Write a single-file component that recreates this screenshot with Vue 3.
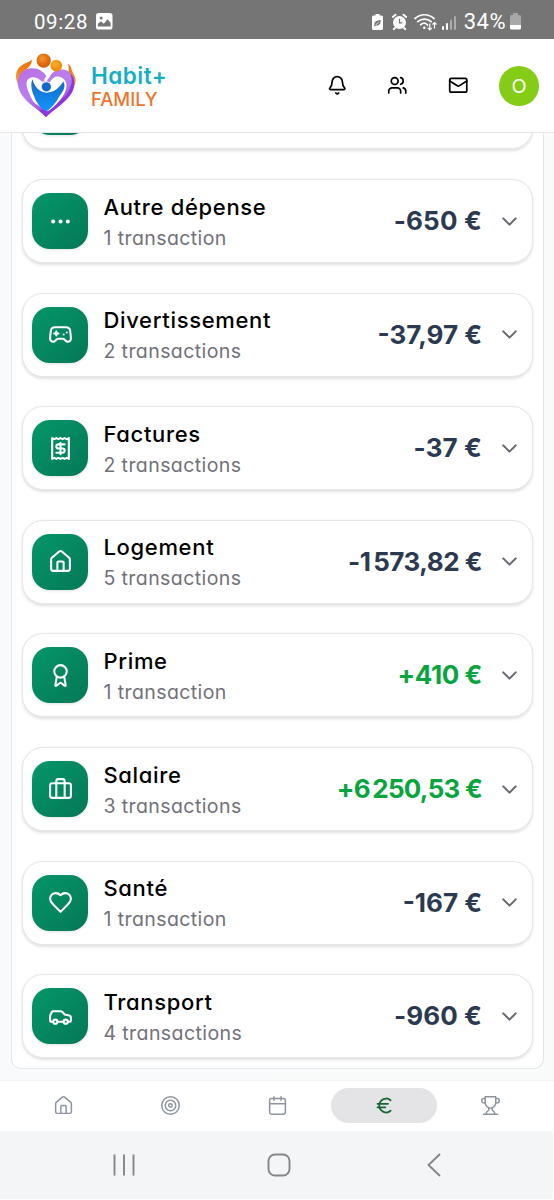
<script setup>
const icons = {
  dots: '<circle cx="5" cy="12" r="1"/><circle cx="12" cy="12" r="1"/><circle cx="19" cy="12" r="1"/>',
  game: '<path d="M6 11h4M8 9v4M15 12h.01M18 10h.01"/><path d="M17.32 5H6.68a4 4 0 0 0-3.978 3.59c-.006.052-.01.101-.017.152C2.604 9.416 2 14.456 2 16a3 3 0 0 0 3 3c1 0 1.5-.5 2-1l1.414-1.414A2 2 0 0 1 9.828 16h4.344a2 2 0 0 1 1.414.586L17 18c.5.5 1 1 2 1a3 3 0 0 0 3-3c0-1.545-.604-6.584-.685-7.258-.007-.05-.011-.1-.017-.151A4 4 0 0 0 17.32 5z"/>',
  receipt: '<path d="M4 2v20l2-1 2 1 2-1 2 1 2-1 2 1 2-1 2 1V2l-2 1-2-1-2 1-2-1-2 1-2-1-2 1Z"/><path d="M16 8h-6a2 2 0 1 0 0 4h4a2 2 0 1 1 0 4H8"/><path d="M12 17.5v-11"/>',
  house: '<path d="M15 21v-8a1 1 0 0 0-1-1h-4a1 1 0 0 0-1 1v8"/><path d="M3 10a2 2 0 0 1 .709-1.528l7-5.999a2 2 0 0 1 2.582 0l7 5.999A2 2 0 0 1 21 10v9a2 2 0 0 1-2 2H5a2 2 0 0 1-2-2z"/>',
  award: '<path d="m15.477 12.89 1.515 8.526a.5.5 0 0 1-.81.47l-3.58-2.687a1 1 0 0 0-1.197 0l-3.586 2.686a.5.5 0 0 1-.81-.469l1.514-8.526"/><circle cx="12" cy="8" r="6"/>',
  briefcase: '<path d="M16 20V4a2 2 0 0 0-2-2h-4a2 2 0 0 0-2 2v16"/><rect x="2" y="6" width="20" height="14" rx="2"/>',
  heart: '<path d="M19 14c1.49-1.46 3-3.21 3-5.5A5.5 5.5 0 0 0 16.5 3c-1.76 0-3 .5-4.5 2-1.5-1.5-2.74-2-4.5-2A5.5 5.5 0 0 0 2 8.5c0 2.3 1.5 4.05 3 5.5l7 7Z"/>',
  car: '<path d="M19 17h2c.6 0 1-.4 1-1v-3c0-.9-.7-1.7-1.5-1.9C18.7 10.6 16 10 16 10s-1.3-1.4-2.2-2.3c-.5-.4-1.1-.7-1.8-.7H5c-.6 0-1.1.4-1.4.9l-1.4 2.9A3.7 3.7 0 0 0 2 12v4c0 .6.4 1 1 1h2"/><circle cx="7" cy="17" r="2"/><path d="M9 17h6"/><circle cx="17" cy="17" r="2"/>',
  bell: '<path d="M10.268 21a2 2 0 0 0 3.464 0"/><path d="M3.262 15.326A1 1 0 0 0 4 17h16a1 1 0 0 0 .74-1.673C19.41 13.956 18 12.499 18 8A6 6 0 0 0 6 8c0 4.499-1.411 5.956-2.738 7.326"/>',
  users: '<path d="M16 21v-2a4 4 0 0 0-4-4H6a4 4 0 0 0-4 4v2"/><circle cx="9" cy="7" r="4"/><path d="M22 21v-2a4 4 0 0 0-3-3.87M16 3.13a4 4 0 0 1 0 7.75"/>',
  mail: '<rect x="2" y="4" width="20" height="16" rx="2"/><path d="m22 7-8.97 5.7a1.94 1.94 0 0 1-2.06 0L2 7"/>',
  target: '<circle cx="12" cy="12" r="10"/><circle cx="12" cy="12" r="6"/><circle cx="12" cy="12" r="2"/>',
  calendar: '<path d="M8 2v4M16 2v4M3 10h18"/><rect x="3" y="4" width="18" height="18" rx="2"/>',
  euro: '<path d="M4 10h12M4 14h9M19 6a7.7 7.7 0 0 0-5.2-2A7.9 7.9 0 0 0 6 12c0 4.4 3.5 8 7.8 8 2 0 3.8-.8 5.2-2"/>',
  trophy: '<path d="M6 9H4.5a2.5 2.5 0 0 1 0-5H6M18 9h1.5a2.5 2.5 0 0 0 0-5H18M4 22h16"/><path d="M10 14.66V17c0 .55-.47.98-.97 1.21C7.85 18.75 7 20.24 7 22M14 14.66V17c0 .55.47.98.97 1.21C16.15 18.75 17 20.24 17 22M18 2H6v7a6 6 0 0 0 12 0V2Z"/>',
}

// thousands: sign and digits before the thin group separator
// tracking: letter spacing of the amount, in pixels
const rows = [
  { icon: 'dots', name: 'Autre dépense', count: '1 transaction', amount: '-650 €', tracking: 0.2 },
  { icon: 'game', name: 'Divertissement', count: '2 transactions', amount: '-37,97 €', tracking: 0 },
  { icon: 'receipt', name: 'Factures', count: '2 transactions', amount: '-37 €', tracking: 0.1 },
  { icon: 'house', name: 'Logement', count: '5 transactions', thousands: '-1', amount: '573,82 €', tracking: -0.5 },
  { icon: 'award', name: 'Prime', count: '1 transaction', amount: '+410 €', tracking: -0.4, income: true },
  { icon: 'briefcase', name: 'Salaire', count: '3 transactions', thousands: '+6', amount: '250,53 €', tracking: -0.75, income: true },
  { icon: 'heart', name: 'Santé', count: '1 transaction', amount: '-167 €', tracking: 0 },
  { icon: 'car', name: 'Transport', count: '4 transactions', amount: '-960 €', tracking: 0.1 },
]

const tabs = ['house', 'target', 'calendar', 'euro', 'trophy']
</script>

<template>
  <div class="screen">
    <div class="status">
      <span class="clock">09:28</span>
      <svg class="photo" viewBox="0 0 16 16"><rect width="16" height="16" rx="2.5" fill="#fff" /><circle cx="5" cy="4.8" r="1.5" fill="#757575" /><path d="M1.8 13V10.5L4.8 8l2.7 2.4L11.3 6l2.9 3.4V13Z" fill="#757575" /></svg>
      <span class="grow"></span>
      <svg class="indicators" viewBox="0 0 88 20">
        <path d="M3.5 3.500h2V2h4v1.500h2a1.500 1.500 0 0 1 1.500 1.500v11.500a1.500 1.500 0 0 1-1.500 1.500h-8A1.500 1.500 0 0 1 2 16.500V5a1.500 1.500 0 0 1 1.500-1.500Z" fill="#fff" />
        <path d="M4.300 13.500c-.3-3.500 1.700-5.300 6.500-5.300 0 3.800-1.800 5.500-4.800 5.200l-1.500 1.300" fill="#757575" /><path d="m5.500 13 3.300-2.800" stroke="#fff" stroke-width=".8" />
        <g fill="none" stroke="#fff" stroke-width="1.900" stroke-linecap="round"><path d="m22.800 5 2.700-2.300M36.200 5l-2.700-2.300M25 16l-1.300 1.200M34 16l1.300 1.200" /></g>
        <circle cx="29.500" cy="10.500" r="6.500" fill="#fff" /><path d="M29.500 6.800v4h3" fill="none" stroke="#757575" stroke-width="1.300" />
        <g fill="none" stroke="#fff" stroke-width="1.700" stroke-linecap="round"><path d="M45 6.500c5.500-5 13.500-5 19 0M47.700 9.700c4-3.500 9.500-3.500 13.500 0M50.500 12.800c2.300-2 5-2 7 .2" /></g>
        <circle cx="54.300" cy="15.700" r="1.300" fill="#fff" />
        <path d="M59.800 11.500v6.300m-2-2 2 2 2-2M64.500 16.500v-6m-2 2 2-2 2 2" fill="none" stroke="#fff" stroke-width="1.200" />
        <g fill="#fff"><rect x="72" y="14" width="2" height="4" rx="1" /><rect x="76" y="11" width="2" height="7" rx="1" /><rect x="80" y="7.500" width="2" height="10.500" rx="1" opacity=".4" /><rect x="84" y="4" width="2" height="14" rx="1" opacity=".4" /></g>
      </svg>
      <span class="percent">34%</span>
      <svg class="battery" viewBox="0 0 11 17"><path d="M1.500 2H3V0h5v2h1.500A1.500 1.500 0 0 1 11 3.500V12H0V3.500A1.500 1.500 0 0 1 1.500 2Z" fill="#a8a8a8" /><path d="M0 12h11v3a1.500 1.500 0 0 1-1.500 1.500h-8A1.500 1.500 0 0 1 0 15Z" fill="#fff" /></svg>
    </div>

    <header class="header">
      <svg class="logo" viewBox="45 160 186 196">
        <defs>
          <linearGradient id="flame" x1="0" y1="0" x2="0" y2="1"><stop offset="0" stop-color="#e96a10" /><stop offset="1" stop-color="#ffb21c" /></linearGradient>
          <linearGradient id="violet" x1="0" y1="0" x2=".5" y2="1"><stop offset="0" stop-color="#bb6fe2" /><stop offset=".55" stop-color="#b980f2" /><stop offset="1" stop-color="#9a3edb" /></linearGradient>
          <linearGradient id="blue" x1="0" y1="0" x2="0" y2="1"><stop offset="0" stop-color="#1466c4" /><stop offset="1" stop-color="#1297ff" /></linearGradient>
          <radialGradient id="orange" cx=".4" cy=".35"><stop offset="0" stop-color="#f8962d" /><stop offset="1" stop-color="#dc6308" /></radialGradient>
          <radialGradient id="amber" cx=".4" cy=".35"><stop offset="0" stop-color="#ffac38" /><stop offset="1" stop-color="#ef8d08" /></radialGradient>
        </defs>
        <path d="M95 179C96 193 88 202 77 211C61 223 55 238 61 263C43 244 43 215 61 200C75 188 88 190 95 179Z" fill="url(#flame)" />
        <path d="M204 192C218 203 213 214 223 226C232 243 226 259 215 270L209 229C202 218 210 207 204 192Z" fill="url(#flame)" />
        <path d="M141 246C143 242 142 239 148 235C158 208 188 205 205 215C228 234 229 264 211 287C191 314 160 332 138 353C113 327 79 311 62 281C46 253 50 221 76 210C103 199 128 211 139 230C134 235 132 240 133 246Z" fill="url(#violet)" />
        <path d="M211 222C229 236 226 265 211 287C191 314 160 332 138 353L117 333C152 324 179 309 200 285C217 261 219 242 211 222Z" fill="#9035dd" />
        <path d="M126 246C108 228 87 230 81 244C74 260 89 286 100 307C115 321 135 330 143 336C164 322 198 290 200 260C201 241 184 229 170 231C158 233 154 243 150 248Z" fill="#fff" />
        <path d="M97 239C103 262 119 279 139 279C160 280 178 266 190 246C201 263 185 282 176 294C166 315 149 329 139 336C121 327 106 306 103 292C94 274 91 254 97 239Z" fill="url(#blue)" />
        <circle cx="139" cy="262" r="17" fill="#fff" /><circle cx="139" cy="262" r="14" fill="#1266cd" />
        <circle cx="131" cy="183" r="21.500" fill="url(#orange)" /><circle cx="169" cy="198" r="17.500" fill="url(#amber)" />
      </svg>
      <div class="brand"><span class="brand-top">Habit+</span><span class="brand-sub">FAMILY</span></div>
      <span class="grow"></span>
      <div class="actions">
        <svg v-for="i in ['bell', 'users', 'mail']" :key="i" class="icon" viewBox="0 0 24 24" v-html="icons[i]"></svg>
      </div>
      <div class="avatar"><span>O</span></div>
    </header>

    <main class="content">
      <section class="panel">
        <article class="card"><div class="tile"></div></article>
        <article v-for="r in rows" :key="r.name" class="card">
          <div class="tile"><svg class="icon" viewBox="0 0 24 24" v-html="icons[r.icon]"></svg></div>
          <div class="info"><span class="name">{{ r.name }}</span><span class="count">{{ r.count }}</span></div>
          <span class="amount" :class="{ income: r.income }" :style="{ letterSpacing: r.tracking + 'px' }"><template v-if="r.thousands">{{ r.thousands }}<span class="thin">&nbsp;</span></template>{{ r.amount }}</span>
          <svg class="icon chevron" viewBox="0 0 24 24"><path d="m6 9 6 6 6-6" /></svg>
        </article>
      </section>
    </main>

    <nav class="tabs">
      <div v-for="t in tabs" :key="t" class="tab" :class="{ active: t === 'euro' }"><svg class="icon" viewBox="0 0 24 24" v-html="icons[t]"></svg></div>
    </nav>
    <div class="system">
      <svg viewBox="0 0 24 24"><path d="M2.500 1.500v21M12 1.500v21M21.500 1.500v21" /></svg>
      <svg viewBox="0 0 24 24"><rect x="1.500" y="1.500" width="21" height="21" rx="6.500" /></svg>
      <svg viewBox="0 0 24 24"><path d="M18 1 6.500 12 18 23" /></svg>
    </div>
  </div>
</template>

<style>
body { background: #fff; }
</style>

<style scoped>
.screen { width: 554px; height: 1200px; display: flex; flex-direction: column; overflow: hidden; font-family: Inter, "Open Sans", sans-serif; font-feature-settings: "cv11"; background: linear-gradient(90deg, #f8fafc, #f9fbfa); }
.grow { flex: 1; }
.icon { display: block; fill: none; stroke: currentColor; stroke-width: 2; stroke-linecap: round; stroke-linejoin: round; }
.status { flex: none; box-sizing: border-box; height: 39px; padding: 4px 33px 0 34px; display: flex; align-items: center; color: #fff; background: #757575; font: 20.5px Roboto, sans-serif; }
.clock { letter-spacing: .6px; }
.photo { width: 16.500px; height: 16.500px; margin-left: 8px; }
.indicators { width: 88px; height: 20px; }
.percent { margin-left: 6px; font-size: 22px; letter-spacing: .5px; }
.battery { width: 11px; height: 17px; margin-left: 4px; }
.header { flex: none; box-sizing: border-box; height: 94px; padding: 0 15px; display: flex; align-items: center; background: #fff; border-bottom: 1px solid #e4e5e7; }
.logo { width: 62px; height: 65px; }
.brand { display: flex; flex-direction: column; margin: 1px 0 0 14px; }
.brand-top { font-size: 22.500px; line-height: 25px; font-weight: 600; letter-spacing: .5px; color: #14afc5; }
.brand-sub { font-size: 18.500px; line-height: 22px; font-weight: 500; color: #ef742c; }
.actions { display: flex; gap: 40px; margin-right: 31px; color: #000; }
.actions .icon { width: 20.500px; height: 20.500px; }
.avatar { width: 40px; height: 40px; border-radius: 50%; display: flex; align-items: center; justify-content: center; color: #fff; background: #84cc16; font-size: 18.500px; }
.avatar span { transform: scaleX(1.07); }
.content { flex: none; box-sizing: border-box; height: 947px; padding: 0 10px 11px 11px; overflow: hidden; }
.panel { box-sizing: border-box; height: 936px; padding: 0 10px 9.800px; display: flex; flex-direction: column; justify-content: flex-end; gap: 29.600px; overflow: hidden; background: #fff; border: 1px solid #e3e6ea; border-top: 0; border-radius: 0 0 10px 10px; }
.card { flex: none; box-sizing: border-box; height: 84px; padding: 0 10px 0 9px; display: flex; align-items: center; background: #fff; border: 1px solid #e5e7eb; border-radius: 21px; box-shadow: 0 1.500px 3px rgba(0, 0, 0, .12); }
.tile { width: 56px; height: 56px; flex: none; display: flex; align-items: center; justify-content: center; color: #fff; background: linear-gradient(135deg, #059669, #047857); border-radius: 18px; box-shadow: 0 1px 3px rgba(0, 0, 0, .12); }
.tile .icon { width: 25px; height: 25px; }
.info { flex: 1; display: flex; flex-direction: column; margin-left: 15.400px; }
.name { font-size: 22px; line-height: 33px; font-weight: 500; letter-spacing: .68px; color: #000; }
.count { font-size: 19.500px; line-height: 28px; letter-spacing: .42px; color: #71717a; }
.amount { font-size: 26px; line-height: 36px; font-weight: 700; color: #2b3a50; white-space: nowrap; }
.amount.income { color: #08a53f; }
.thin { font-size: 14px; line-height: 0; }
.chevron { width: 25px; height: 25px; margin-left: 15px; color: #686871; }
.tabs { flex: none; box-sizing: border-box; height: 51px; padding: 0 9.700px 1px 10.300px; display: flex; align-items: center; background: #fff; border-top: 1px solid #f1f2f4; }
.tab { flex: 1; height: 35px; display: flex; align-items: center; justify-content: center; color: #8d949f; border-radius: 18px; }
.tab .icon { width: 21px; height: 21px; stroke-width: 1.700; }
.tab.active { color: #166534; background: #e4e4e7; }
.tab.active .icon { stroke-width: 2; }
.system { flex: 1; padding: 0 41px 0 46px; display: grid; grid-template-columns: 1fr 1fr 1fr; place-items: center; background: #f4f5f7; border-right: 1px solid #fff; border-bottom: 1px solid #fff; }
.system svg { width: 24px; height: 24px; fill: none; stroke: #85868a; stroke-width: 1.900; }
</style>
